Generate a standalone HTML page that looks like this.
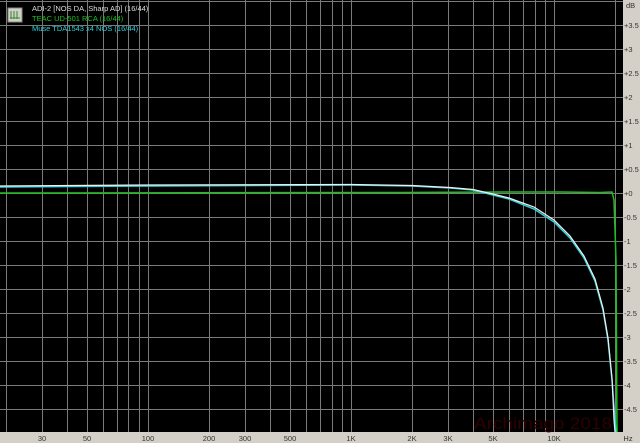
<!DOCTYPE html>
<html><head><meta charset="utf-8"><style>
body{margin:0;width:640px;height:443px;background:#d4d0c8;overflow:hidden;font-family:"Liberation Sans",sans-serif}
svg{display:block}
</style></head><body>
<svg width="640" height="443" xmlns="http://www.w3.org/2000/svg" font-family="Liberation Sans, sans-serif">
<rect x="0" y="0" width="640" height="443" fill="#d4d0c8"/>
<rect x="0" y="0" width="623" height="432" fill="#000"/>
<g stroke="#7a7a7a" stroke-width="1">
<path d="M0 1.5H623M0 25.5H623M0 49.5H623M0 73.5H623M0 97.5H623M0 121.5H623M0 145.5H623M0 169.5H623M0 193.5H623M0 217.5H623M0 241.5H623M0 265.5H623M0 289.5H623M0 313.5H623M0 337.5H623M0 361.5H623M0 385.5H623M0 409.5H623"/>
<path d="M6.5 0V432M42.5 0V432M67.5 0V432M87.5 0V432M103.5 0V432M117.5 0V432M128.5 0V432M139.5 0V432M148.5 0V432M209.5 0V432M245.5 0V432M270.5 0V432M290.5 0V432M306.5 0V432M320.5 0V432M332.5 0V432M342.5 0V432M351.5 0V432M412.5 0V432M448.5 0V432M473.5 0V432M493.5 0V432M509.5 0V432M523.5 0V432M535.5 0V432M545.5 0V432M554.5 0V432M615.5 0V432"/>
</g>
<text x="474" y="429" font-size="17" fill="#2e0000" textLength="138" lengthAdjust="spacingAndGlyphs">Archimago 2018</text>
<path d="M0 193 L400 192.5 L500 192 L560 192 L600 192.5 L612 192 L614 200 L616 260 L617 432" stroke="#1ec01e" stroke-width="1.5" fill="none"/>
<path d="M0 187 L150 186 L351 185 L412 186 L450 188 L473 190 L493 195 L509 199 L534 209 L554 222 L570 238 L584 258 L595 281 L603 310 L608 340 L612 380 L615 420 L616 432" stroke="#2fd0d8" stroke-width="1.5" fill="none"/>
<path d="M0 186 L150 185 L351 184.5 L412 185.5 L450 187.5 L473 189.5 L493 194 L509 198 L534 207 L554 220 L570 236 L584 256 L595 279 L603 308 L608 338 L612 378 L614 420 L615 432" stroke="#f0f0f0" stroke-width="1.2" fill="none"/>
<g transform="translate(8,8)">
<rect x="0" y="0" width="14" height="14" fill="#d4d0c8" stroke="#888"/>
<path d="M3 3V11M6 3V11M9 3V11M2 10H12" stroke="#2a8a2a" stroke-width="1"/>
</g>
<g font-size="7.5">
<text x="32" y="11" fill="#ddd">ADI-2 [NOS DA, Sharp AD] (16/44)</text>
<text x="32" y="21" fill="#1ec01e">TEAC UD-501 RCA (16/44)</text>
<text x="32" y="31" fill="#2fd0d8">Muse TDA1543 x4 NOS (16/44)</text>
</g>
<g font-size="7.5" fill="#333">
<text x="626" y="8">dB</text>
<text x="624" y="28">+3.5</text><text x="624" y="52">+3</text><text x="624" y="76">+2.5</text><text x="624" y="100">+2</text>
<text x="624" y="124">+1.5</text><text x="624" y="148">+1</text><text x="624" y="172">+0.5</text><text x="624" y="196">+0</text>
<text x="624" y="220">-0.5</text><text x="624" y="244">-1</text><text x="624" y="268">-1.5</text><text x="624" y="292">-2</text>
<text x="624" y="316">-2.5</text><text x="624" y="340">-3</text><text x="624" y="364">-3.5</text><text x="624" y="388">-4</text><text x="624" y="412">-4.5</text>
<g text-anchor="middle">
<text x="42" y="441">30</text><text x="87" y="441">50</text><text x="148" y="441">100</text><text x="209" y="441">200</text><text x="245" y="441">300</text><text x="290" y="441">500</text><text x="351" y="441">1K</text><text x="412" y="441">2K</text><text x="448" y="441">3K</text><text x="493" y="441">5K</text><text x="554" y="441">10K</text><text x="628" y="441">Hz</text>
</g>
</g>
</svg>
</body></html>
